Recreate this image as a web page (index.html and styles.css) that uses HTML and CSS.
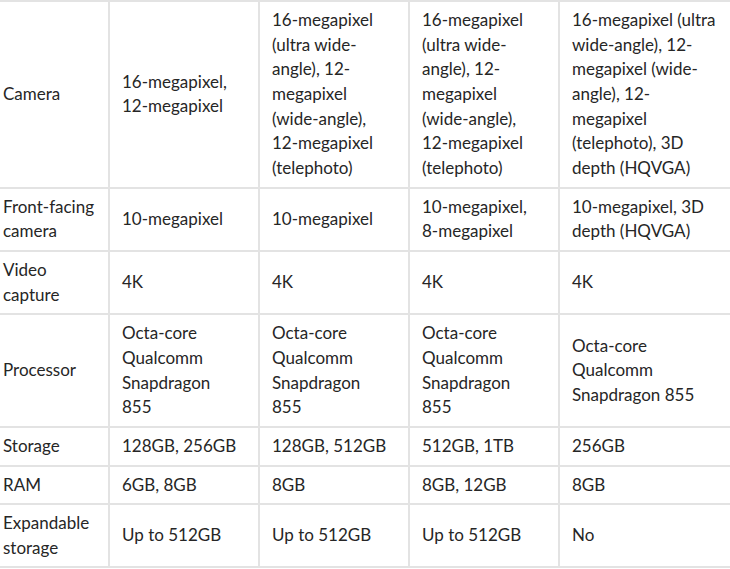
FILE: index.html
```html
<!DOCTYPE html>
<html>
<head>
<meta charset="utf-8">
<link rel="stylesheet" href="styles.css">
</head>
<body>
<table class="specs">
  <colgroup>
    <col class="c-label">
    <col class="c-val">
    <col class="c-val">
    <col class="c-val">
    <col class="c-last">
  </colgroup>
  <tbody>
    <tr>
      <td>Camera</td>
      <td>16-megapixel, 12-megapixel</td>
      <td>16-megapixel (ultra wide-angle), 12-megapixel (wide-angle), 12-megapixel (telephoto)</td>
      <td>16-megapixel (ultra wide-angle), 12-megapixel (wide-angle), 12-megapixel (telephoto)</td>
      <td>16-megapixel (ultra wide-angle), 12-megapixel (wide-angle), 12-megapixel (telephoto), 3D depth (HQVGA)</td>
    </tr>
    <tr>
      <td>Front-facing camera</td>
      <td>10-megapixel</td>
      <td>10-megapixel</td>
      <td>10-megapixel, 8-megapixel</td>
      <td>10-megapixel, 3D depth (HQVGA)</td>
    </tr>
    <tr>
      <td>Video capture</td>
      <td>4K</td>
      <td>4K</td>
      <td>4K</td>
      <td>4K</td>
    </tr>
    <tr>
      <td>Processor</td>
      <td>Octa-core Qualcomm Snapdragon 855</td>
      <td>Octa-core Qualcomm Snapdragon 855</td>
      <td>Octa-core Qualcomm Snapdragon 855</td>
      <td>Octa-core Qualcomm Snapdragon 855</td>
    </tr>
    <tr>
      <td>Storage</td>
      <td>128GB, 256GB</td>
      <td>128GB, 512GB</td>
      <td>512GB, 1TB</td>
      <td>256GB</td>
    </tr>
    <tr>
      <td>RAM</td>
      <td>6GB, 8GB</td>
      <td>8GB</td>
      <td>8GB, 12GB</td>
      <td>8GB</td>
    </tr>
    <tr>
      <td>Expandable storage</td>
      <td>Up to 512GB</td>
      <td>Up to 512GB</td>
      <td>Up to 512GB</td>
      <td>No</td>
    </tr>
  </tbody>
</table>
</body>
</html>
```
FILE: styles.css
```css
html, body {
  margin: 0;
  padding: 0;
  background: #fff;
  overflow: hidden;
}

.specs {
  border-collapse: collapse;
  table-layout: fixed;
  width: 740px;
  font-family: "Lato", "Liberation Sans", sans-serif;
  font-size: 17px;
  line-height: 24.65px;
  color: #262626;
}

.c-label { width: 109px; }
.c-val { width: 150px; }
.c-last { width: 181px; }

.specs td {
  border-top: 2px solid #e3e3e3;
  border-bottom: 2px solid #e3e3e3;
  border-left: 2px solid #e3e3e3;
  padding: 6px 18px 6px 12px;
  vertical-align: middle;
  text-align: left;
}

.specs td:first-child {
  border-left: none;
  padding-left: 3px;
  padding-right: 6px;
}
```
